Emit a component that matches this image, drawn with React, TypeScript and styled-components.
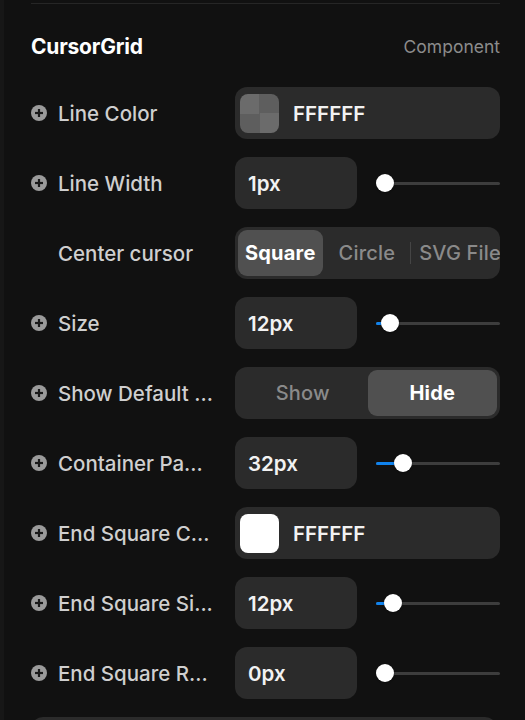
import React from "react";
import styled, { createGlobalStyle } from "styled-components";

const Global = createGlobalStyle`
  html, body { margin: 0; padding: 0; background: #111111; }
  body { font-family: Inter, "Noto Sans", sans-serif; -webkit-font-smoothing: antialiased; }
`;

const Page = styled.div`
  display: flex;
  height: 720px;
  overflow: hidden;
  background: #111111;
`;

const Strip = styled.div`
  width: 4px;
  flex: none;
  background: #171717;
`;

const Panel = styled.div`
  flex: 1;
  padding: 3px 25px 0 27px;
  display: flex;
  flex-direction: column;
  & > * { flex: none; }
`;

const Divider = styled.div`
  height: 1px;
  background: #262626;
`;

const Header = styled.div`
  margin: 17px 0 16px;
  height: 50px;
  display: flex;
  align-items: center;
  justify-content: space-between;
`;

const Title = styled.div`
  font-size: 21px;
  font-weight: 700;
  color: #ffffff;
  letter-spacing: -0.2px;
`;

const Kind = styled.div`
  font-size: 17.5px;
  color: #8c8c8c;
`;

const Rows = styled.div`
  display: flex;
  flex-direction: column;
  gap: 18px;
`;

const Row = styled.div`
  display: grid;
  grid-template-columns: 204px 1fr;
  height: 52px;
  align-items: center;
  flex: none;
`;

const Label = styled.div`
  display: flex;
  align-items: center;
  gap: 11px;
  font-size: 20.5px;
  font-weight: 500;
  color: #cfcfcf;
  white-space: nowrap;
`;

const LabelText = styled.span<{ $indent?: boolean }>`
  margin-left: ${(p) => (p.$indent ? "27px" : "0")};
`;

const PlusIcon = () => (
  <svg width="16" height="16" viewBox="0 0 16 16">
    <circle cx="8" cy="8" r="8" fill="#9b9b9b" />
    <rect x="4" y="6.9" width="8" height="2.2" fill="#1a1a1a" />
    <rect x="6.9" y="4" width="2.2" height="8" fill="#1a1a1a" />
  </svg>
);

const Box = styled.div`
  height: 52px;
  background: #2b2b2b;
  border-radius: 12px;
  display: flex;
  align-items: center;
  box-sizing: border-box;
`;

const ColorBox = styled(Box)`
  padding: 0 5px;
  gap: 14px;
`;

const Swatch = styled.div<{ $empty?: boolean }>`
  width: 39px;
  height: 39px;
  border-radius: 8px;
  background: ${(p) =>
    p.$empty
      ? "conic-gradient(#5e5e5e 0 25%, #6b6b6b 0 50%, #5e5e5e 0 75%, #6b6b6b 0)"
      : "#ffffff"};
`;

const Value = styled.span`
  font-size: 20.5px;
  font-weight: 600;
  color: #f2f2f2;
`;

const NumberGroup = styled.div`
  display: flex;
  align-items: center;
`;

const NumberBox = styled(Box)`
  width: 122px;
  padding-left: 13px;
  flex: none;
`;

const Slider = styled.div`
  position: relative;
  margin-left: 19px;
  flex: 1;
  height: 18px;
  display: flex;
  align-items: center;
`;

const Track = styled.div`
  height: 3px;
  width: 100%;
  background: #3d3d3d;
  border-radius: 2px;
`;

const Fill = styled.div`
  position: absolute;
  left: 0;
  top: 7.5px;
  height: 3px;
  background: #1083ee;
  border-radius: 2px;
`;

const Knob = styled.div`
  position: absolute;
  top: 0;
  width: 18px;
  height: 18px;
  margin-left: -9px;
  border-radius: 50%;
  background: #ffffff;
  box-shadow: 0 1px 2px rgba(0, 0, 0, 0.4);
`;

const Segmented = styled(Box)`
  padding: 3px;
  overflow: hidden;
  white-space: nowrap;
`;

const SegItem = styled.div<{ $active?: boolean; $grow?: boolean; $pl?: number; $pr?: number }>`
  height: 46px;
  display: flex;
  align-items: center;
  justify-content: center;
  flex: ${(p) => (p.$grow ? "1" : "none")};
  padding: 0 ${(p) => p.$pr ?? 7}px 0 ${(p) => p.$pl ?? 7}px;
  border-radius: 9px;
  font-size: 20px;
  letter-spacing: 0.2px;
  font-weight: ${(p) => (p.$active ? 700 : 500)};
  color: ${(p) => (p.$active ? "#ffffff" : "#8a8a8a")};
  background: ${(p) => (p.$active ? "#505050" : "transparent")};
`;

const SegDivider = styled.div`
  width: 1px;
  height: 22px;
  background: #454545;
  flex: none;
`;

const Footer = styled.div`
  margin: 18px 3px 0 0;
  height: 52px;
  background: #2b2b2b;
  border-radius: 12px;
`;

type SliderRowProps = { label: string; value: string; pos: number };

const NumberRow = ({ label, value, pos }: SliderRowProps) => (
  <Row>
    <Label>
      <PlusIcon />
      <span>{label}</span>
    </Label>
    <NumberGroup>
      <NumberBox>
        <Value>{value}</Value>
      </NumberBox>
      <Slider>
        <Track />
        {pos > 9 && <Fill style={{ width: pos }} />}
        <Knob style={{ left: pos }} />
      </Slider>
    </NumberGroup>
  </Row>
);

const ColorRow = ({ label, empty }: { label: string; empty?: boolean }) => (
  <Row>
    <Label>
      <PlusIcon />
      <span>{label}</span>
    </Label>
    <ColorBox>
      <Swatch $empty={empty} />
      <Value>FFFFFF</Value>
    </ColorBox>
  </Row>
);

export default function App() {
  return (
    <>
      <Global />
      <Page>
        <Strip />
        <Panel>
          <Divider />
          <Header>
            <Title>CursorGrid</Title>
            <Kind>Component</Kind>
          </Header>
          <Rows>
            <ColorRow label="Line Color" empty />
            <NumberRow label="Line Width" value="1px" pos={9} />
            <Row>
              <Label>
                <LabelText $indent>Center cursor</LabelText>
              </Label>
              <Segmented>
                <SegItem $active>Square</SegItem>
                <SegItem $pl={16} $pr={15}>Circle</SegItem>
                <SegDivider />
                <SegItem $pl={8}>SVG File</SegItem>
              </Segmented>
            </Row>
            <NumberRow label="Size" value="12px" pos={14} />
            <Row>
              <Label>
                <PlusIcon />
                <span>Show Default ...</span>
              </Label>
              <Segmented>
                <SegItem $grow>Show</SegItem>
                <SegItem $grow $active>Hide</SegItem>
              </Segmented>
            </Row>
            <NumberRow label="Container Pa..." value="32px" pos={27} />
            <ColorRow label="End Square C..." />
            <NumberRow label="End Square Si..." value="12px" pos={17} />
            <NumberRow label="End Square R..." value="0px" pos={9} />
          </Rows>
          <Footer />
        </Panel>
      </Page>
    </>
  );
}
